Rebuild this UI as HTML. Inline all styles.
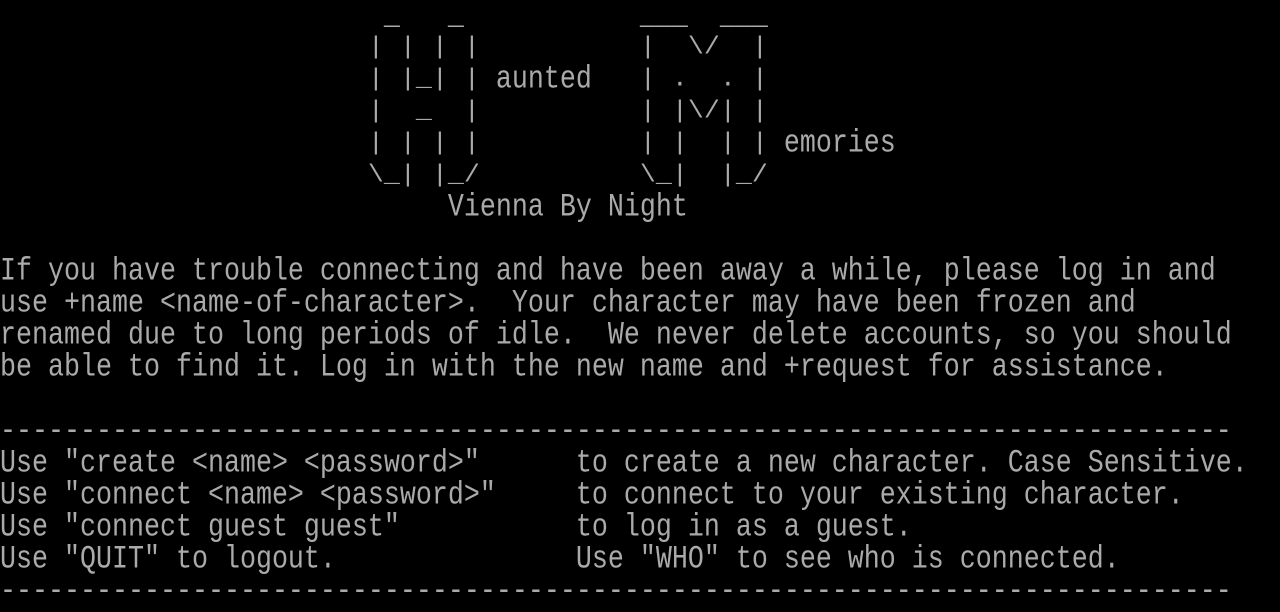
<!DOCTYPE html>
<html><head><meta charset="utf-8"><style>
html,body{margin:0;padding:0;background:#000;width:1280px;height:608px;overflow:hidden}
.t{position:absolute;left:0;top:0;font-family:"Liberation Mono","DejaVu Sans Mono",monospace;font-size:26.667px;color:#aaaaaa;}
.t div{height:32px;line-height:32px;white-space:pre;transform:scaleY(1.22);transform-origin:50% 50%;}
.t div.a{transform:scaleY(0.92);}
</style></head><body><div class="t">
<div>                        _   _           ___  ___</div>
<div class="a">                       | | | |          |  \/  |</div>
<div class="a">                       | |_| | <span style="display:inline-block;transform:scaleY(1.326)">aunted</span>   | .  . |</div>
<div class="a">                       |  _  |          | |\/| |</div>
<div class="a">                       | | | |          | |  | | <span style="display:inline-block;transform:scaleY(1.326)">emories</span></div>
<div class="a">                       \_| |_/          \_|  |_/</div>
<div>                            Vienna By Night</div>
<div> </div>
<div>If you have trouble connecting and have been away a while, please log in and</div>
<div>use +name &lt;name-of-character&gt;.  Your character may have been frozen and</div>
<div>renamed due to long periods of idle.  We never delete accounts, so you should</div>
<div>be able to find it. Log in with the new name and +request for assistance.</div>
<div> </div>
<div>-----------------------------------------------------------------------------</div>
<div>Use "create &lt;name&gt; &lt;password&gt;"      to create a new character. Case Sensitive.</div>
<div>Use "connect &lt;name&gt; &lt;password&gt;"     to connect to your existing character.</div>
<div>Use "connect guest guest"           to log in as a guest.</div>
<div>Use "QUIT" to logout.               Use "WHO" to see who is connected.</div>
<div>-----------------------------------------------------------------------------</div>
</div></body></html>
